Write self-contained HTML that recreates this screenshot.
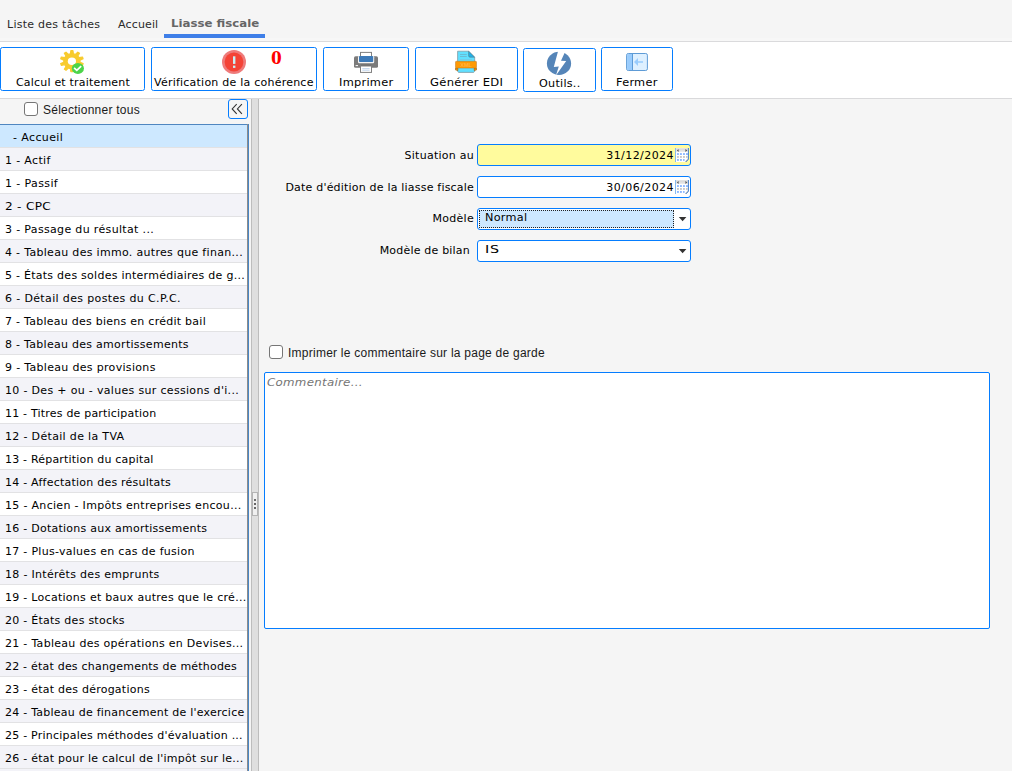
<!DOCTYPE html>
<html lang="fr">
<head>
<meta charset="utf-8">
<title>Liasse fiscale</title>
<style>
*{box-sizing:border-box;margin:0;padding:0}
html,body{width:1012px;height:771px;overflow:hidden;background:#f5f5f5}
body{position:relative;font-family:"DejaVu Sans","Liberation Sans",sans-serif;font-size:11px;letter-spacing:.26px;color:#000}
.abs{position:absolute}
.t{position:absolute;line-height:13px;white-space:nowrap}
.btn{position:absolute;top:47px;height:44px;border:1px solid #057dff;border-radius:2.5px;background:#fff}
.ico{position:absolute;overflow:visible}
#list{left:0;top:124px;width:249px;height:647px;border-top:1px solid #4f86c0;background:#fff;overflow:hidden}
.row{height:23px;line-height:25px;padding-left:5px;border-bottom:1px solid #e2e2e4;white-space:nowrap;overflow:hidden;color:#000;background:#fff}
.row.alt{background:#f3f3f8}
.row.sel{background:#cde8ff}
.lab{position:absolute;text-align:right;line-height:13px;white-space:nowrap}
.inp{position:absolute;left:477px;width:214px;height:22px;border:1px solid #057dff;border-radius:3px;background:#fff}
.ar{font-family:"Liberation Sans",sans-serif;font-size:12px;letter-spacing:.245px;color:#1a1a1a}
</style>
</head>
<body>
<!-- tabs -->
<div class="t" style="left:7px;top:18px;color:#2a2a2a">Liste des tâches</div>
<div class="t" style="left:118px;top:18px;color:#2a2a2a;letter-spacing:.15px">Accueil</div>
<div class="t" style="left:171px;top:17px;font-weight:bold;color:#666;letter-spacing:0;transform-origin:0 50%;transform:scaleX(1.07)">Liasse fiscale</div>
<div class="abs" style="left:164px;top:34px;width:101px;height:4px;background:#3f7fe8"></div>
<div class="abs" style="left:0;top:38px;width:1012px;height:3px;background:#f7f7f7"></div>
<div class="abs" style="left:0;top:41px;width:1012px;height:1px;background:#dadadc"></div>
<!-- toolbar -->
<div class="abs" style="left:0;top:42px;width:1012px;height:56px;background:#fff"></div>
<div class="abs" style="left:0;top:98px;width:1012px;height:1px;background:#d9d9db"></div>

<div class="btn" style="left:0px;width:145px"></div>
<div class="btn" style="left:151px;width:166px"></div>
<div class="btn" style="left:323px;width:86px"></div>
<div class="btn" style="left:415px;width:103px"></div>
<div class="btn" style="left:523px;width:73px;top:48px"></div>
<div class="btn" style="left:601px;width:72px"></div>

<div class="t" id="b1" style="left:16px;top:76px;letter-spacing:.19px">Calcul et traitement</div>
<div class="t" id="b2" style="left:154px;top:76px;letter-spacing:.23px">Vérification de la cohérence</div>
<div class="t" id="b3" style="left:339px;top:76px;letter-spacing:.26px;transform-origin:0 50%;transform:scaleX(1.035)">Imprimer</div>
<div class="t" id="b4" style="left:430px;top:76px;letter-spacing:.26px;transform-origin:0 50%;transform:scaleX(1.052)">Générer EDI</div>
<div class="t" id="b5" style="left:539px;top:77px;letter-spacing:.26px;transform-origin:0 50%;transform:scaleX(1.015)">Outils..</div>
<div class="t" id="b6" style="left:616px;top:76px;letter-spacing:.26px;transform-origin:0 50%;transform:scaleX(1.029)">Fermer</div>
<div class="t" style="left:271px;top:47px;font-family:'Liberation Serif',serif;font-weight:bold;font-size:18px;line-height:20px;letter-spacing:0;color:#f00;transform:translate(1px,.5px) scale(1.2,1)">0</div>

<!-- icons -->
<svg class="ico" style="left:56px;top:46px" width="32" height="32" viewBox="56 46 32 32">
 <g transform="translate(71.9 61.2) scale(1 .92)">
 <path fill="#f8cb2e" stroke="#f8cb2e" stroke-width="1.2" stroke-linejoin="round" d="M-1.49 -8.06 L-1.04 -11.45 L1.04 -11.45 L1.49 -8.06 L3.53 -7.40 L5.89 -9.88 L7.57 -8.65 L5.95 -5.64 L7.21 -3.91 L10.57 -4.53 L11.21 -2.55 L8.13 -1.07 L8.13 1.07 L11.21 2.55 L10.57 4.53 L7.21 3.91 L5.95 5.64 L7.57 8.65 L5.89 9.88 L3.53 7.40 L1.49 8.06 L1.04 11.45 L-1.04 11.45 L-1.49 8.06 L-3.53 7.40 L-5.89 9.88 L-7.57 8.65 L-5.95 5.64 L-7.21 3.91 L-10.57 4.53 L-11.21 2.55 L-8.13 1.07 L-8.13 -1.07 L-11.21 -2.55 L-10.57 -4.53 L-7.21 -3.91 L-5.95 -5.64 L-7.57 -8.65 L-5.89 -9.88 L-3.53 -7.40Z"/>
 <circle r="4.1" fill="#fff"/>
 </g>
 <ellipse cx="77.9" cy="68.45" rx="6.05" ry="5.55" fill="#4cd44a"/>
 <path d="M74.1 67.9 L76.8 70.4 L81.2 66.2" fill="none" stroke="#fff" stroke-width="1.7"/>
</svg>

<svg class="ico" style="left:220px;top:48px" width="28" height="28" viewBox="220 48 28 28">
 <circle cx="234" cy="62" r="12" fill="#ee7b7b"/>
 <circle cx="234" cy="62" r="9.4" fill="#f44336"/>
 <rect x="233" y="56.3" width="2.4" height="7.6" fill="#c9f1f7"/>
 <rect x="233" y="65.6" width="2.4" height="2.3" fill="#c9f1f7"/>
</svg>

<svg class="ico" style="left:352px;top:50px" width="28" height="24" viewBox="352 50 28 24">
 <rect x="354" y="56.3" width="24" height="11.5" rx="1.6" fill="#7b7b7b"/>
 <rect x="360.5" y="52.4" width="11" height="5" fill="#fff" stroke="#808080" stroke-width="1"/>
 <rect x="358" y="56" width="16.2" height="7.2" rx="1.2" fill="#f4f4f4"/>
 <rect x="359" y="56" width="14.2" height="6" rx="0.8" fill="#3d7ab8"/>
 <rect x="355.6" y="65" width="2.4" height="1.1" fill="#f0f0f0"/>
 <rect x="361" y="64.7" width="10.2" height="1" fill="#666"/>
 <rect x="360.5" y="66" width="11" height="6.4" fill="#fff" stroke="#808080" stroke-width="1"/>
 <rect x="362.3" y="68.1" width="7.3" height="1" fill="#c2d6ee"/>
 <rect x="362.3" y="69.7" width="7.3" height="1" fill="#c2d6ee"/>
</svg>

<svg class="ico" style="left:453px;top:49px" width="26" height="26" viewBox="453 49 26 26">
 <path d="M457.6 51.2 H468.6 L474.7 57.2 V71.4 L473.6 72.4 H458.7 L457.6 71.4Z" fill="#61e0ff" stroke="#7d8f98" stroke-width=".7" stroke-linejoin="round"/>
 <path d="M468.6 51.2 L474.6 57.2 H470 Q468.6 57.2 468.6 55.8Z" fill="#1fb2ea" stroke="#5a6a72" stroke-width=".5"/>
 <rect x="460" y="54" width="6.8" height=".8" fill="#6cb4cc"/>
 <rect x="460" y="56.2" width="6.8" height=".8" fill="#6cb4cc"/>
 <rect x="460" y="59" width="12" height=".6" fill="#7cc4dc"/>
 <path d="M455.5 68 V70 L457.8 70.6 V68Z M476.5 68 V70 L474.2 70.6 V68Z" fill="#f59300" stroke="#8a5a10" stroke-width=".5"/>
 <rect x="455.5" y="61.3" width="21" height="6.8" rx=".8" fill="#ff9a03" stroke="#b9772a" stroke-width=".5"/>
 <text x="460.2" y="66.8" font-family="Liberation Sans, sans-serif" font-weight="bold" font-size="5.6" letter-spacing="0" fill="#ffb23e">XML</text>
</svg>

<svg class="ico" style="left:545px;top:49px" width="28" height="28" viewBox="545 49 28 28">
 <ellipse cx="559" cy="63.4" rx="12.1" ry="11.6" fill="#5585b8"/>
 <path d="M558.4 50 L553.8 66.9 L558.8 66.5 L555.9 75.6 L566.2 61 L561 60.75 L565 52 Z" fill="#fff"/>
</svg>

<svg class="ico" style="left:624px;top:51px" width="26" height="22" viewBox="624 51 26 22">
 <rect x="626.6" y="53.5" width="20.8" height="17" rx="1.7" fill="#def0ff" stroke="#5e9bd6" stroke-width="1"/>
 <path d="M628.6 54 H632.5 V70 H628.6 Q627.1 70 627.1 68.5 V55.5 Q627.1 54 628.6 54Z" fill="#99ccfd"/>
 <rect x="632" y="53.5" width="1" height="17" fill="#5e9bd6"/>
 <path d="M634 62 L638 58 V61.2 H643 V62.8 H638 V66Z" fill="#99ccfd"/>
</svg>

<!-- left panel header -->
<div class="abs" style="left:24px;top:102px;width:14px;height:14px;border:1px solid #767676;border-radius:3px;background:#fff"></div>
<div class="t ar" style="left:43px;top:103px;line-height:14px">Sélectionner tous</div>
<div class="abs" style="left:228px;top:99px;width:20px;height:20px;border:1px solid #057dff;border-radius:3px;background:#f5f5f5"></div>
<svg class="ico" style="left:228px;top:99px" width="20" height="20" viewBox="228 99 20 20">
 <path d="M236.7 104.1 L232.2 108.9 L236.7 113.8 M241.9 104.1 L237.4 108.9 L241.9 113.8" fill="none" stroke="#333" stroke-width="1.1"/>
</svg>

<div id="list" class="abs">
<div class="row sel" style="letter-spacing:0.39px;padding-left:13px">- Accueil</div>
<div class="row alt" style="letter-spacing:0.34px">1 - Actif</div>
<div class="row" style="letter-spacing:0.39px">1 - Passif</div>
<div class="row alt"><span style="display:inline-block;transform-origin:0 50%;transform:scaleX(1.10)">2 - CPC</span></div>
<div class="row" style="letter-spacing:0.34px">3 - Passage du résultat ...</div>
<div class="row alt" style="letter-spacing:0.31px">4 - Tableau des immo. autres que finan...</div>
<div class="row" style="letter-spacing:0.26px">5 - États des soldes intermédiaires de g...</div>
<div class="row alt" style="letter-spacing:0.36px">6 - Détail des postes du C.P.C.</div>
<div class="row" style="letter-spacing:0.26px">7 - Tableau des biens en crédit bail</div>
<div class="row alt" style="letter-spacing:0.28px">8 - Tableau des amortissements</div>
<div class="row" style="letter-spacing:0.32px">9 - Tableau des provisions</div>
<div class="row alt" style="letter-spacing:0.32px">10 - Des + ou - values sur cessions d'i...</div>
<div class="row" style="letter-spacing:0.20px">11 - Titres de participation</div>
<div class="row alt" style="letter-spacing:0.33px">12 - Détail de la TVA</div>
<div class="row" style="letter-spacing:0.19px">13 - Répartition du capital</div>
<div class="row alt" style="letter-spacing:0.23px">14 - Affectation des résultats</div>
<div class="row" style="letter-spacing:0.31px">15 - Ancien - Impôts entreprises encou...</div>
<div class="row alt" style="letter-spacing:0.25px">16 - Dotations aux amortissements</div>
<div class="row" style="letter-spacing:0.29px">17 - Plus-values en cas de fusion</div>
<div class="row alt" style="letter-spacing:0.30px">18 - Intérêts des emprunts</div>
<div class="row" style="letter-spacing:0.28px">19 - Locations et baux autres que le cré...</div>
<div class="row alt" style="letter-spacing:0.26px">20 - États des stocks</div>
<div class="row" style="letter-spacing:0.29px">21 - Tableau des opérations en Devises...</div>
<div class="row alt" style="letter-spacing:0.21px">22 - état des changements de méthodes</div>
<div class="row" style="letter-spacing:0.24px">23 - état des dérogations</div>
<div class="row alt" style="letter-spacing:0.24px">24 - Tableau de financement de l'exercice</div>
<div class="row" style="letter-spacing:0.23px">25 - Principales méthodes d'évaluation ...</div>
<div class="row alt" style="letter-spacing:0.24px">26 - état pour le calcul de l'impôt sur le...</div>
<div class="row alt">&nbsp;</div>
</div>
<div class="abs" style="left:247px;top:124px;width:1px;height:647px;background:#8c8c8c"></div>
<div class="abs" style="left:248px;top:124px;width:1px;height:647px;background:#4a86c5"></div>

<!-- splitter -->
<div class="abs" style="left:251px;top:99px;width:8px;height:672px;background:#dfdfdf;border-left:1px solid #bdbdbd;border-right:1px solid #bdbdbd"></div>
<div class="abs" style="left:252px;top:492px;width:6px;height:24px;background:#f0f0f0;border:1px solid #b4b4b4"></div>
<div class="abs" style="left:254px;top:499px;width:2px;height:2px;background:#6e6e6e"></div>
<div class="abs" style="left:254px;top:503px;width:2px;height:2px;background:#666"></div>
<div class="abs" style="left:254px;top:507px;width:2px;height:2px;background:#666"></div>

<!-- form -->
<div class="lab" style="right:538px;top:149px">Situation au</div>
<div class="lab" style="right:538px;top:181px;letter-spacing:.2px">Date d'édition de la liasse fiscale</div>
<div class="lab" style="right:538px;top:212px;letter-spacing:.3px">Modèle</div>
<div class="lab" style="right:542px;top:244px;letter-spacing:.2px">Modèle de bilan</div>

<div class="inp" style="top:144px;background:#fffb9d"></div>
<div class="inp" style="top:176px"></div>
<div class="inp" style="top:208px"></div>
<div class="inp" style="top:240px"></div>
<div class="lab" style="right:338px;top:149px;letter-spacing:.44px">31/12/2024</div>
<div class="lab" style="right:338px;top:181px;letter-spacing:.44px">30/06/2024</div>
<div class="abs" style="left:479px;top:210px;width:195px;height:18px;background:#cde8ff;border:1px dotted #222"></div>
<div class="t" style="left:485px;top:211px;letter-spacing:.26px;transform-origin:0 50%;transform:scaleX(1.024)">Normal</div>
<div class="t" style="left:485px;top:243px;letter-spacing:.6px;transform-origin:0 50%;transform:scaleX(1.3)">IS</div>
<svg class="ico" style="left:678px;top:216px" width="10" height="6" viewBox="678 216 10 6"><path d="M678.8 217 H686.4 L682.6 221.3Z" fill="#333"/></svg>
<svg class="ico" style="left:678px;top:248px" width="10" height="6" viewBox="678 248 10 6"><path d="M678.8 249 H686.4 L682.6 253.3Z" fill="#333"/></svg>

<!-- calendar icons -->
<svg class="ico" style="left:675px;top:148px" width="14" height="14" viewBox="0 0 14 14">
 <rect x="1" y="0" width="12.6" height="14" fill="#fff"/>
 <rect x="0" y="0" width="1" height="14" fill="#86baf0"/>
 <rect x="1" y="0.2" width="12" height="3.7" fill="#dcdcdc"/>
 <rect x="1" y="2.6" width="12" height="1.3" fill="#ececec"/>
 <path d="M1.9 2.4 L3.6 0.9 V3.9Z M12.3 2.4 L10.4 0.9 V3.9Z" fill="#555"/>
 <g fill="#8db9ff"><rect x="2" y="5.1" width="1.9" height="1.9"/><rect x="5" y="5.1" width="1.9" height="1.9"/><rect x="8" y="5.1" width="1.9" height="1.9"/><rect x="11" y="5.1" width="1.9" height="1.9"/>
 <rect x="2" y="11" width="1.9" height="1.9"/><rect x="5" y="11" width="1.9" height="1.9"/><rect x="8" y="11" width="1.6" height="1.9"/></g>
 <g fill="#c9c9c9"><rect x="2" y="8" width="1.9" height="1.9"/><rect x="5" y="8" width="1.9" height="1.9"/><rect x="8" y="8" width="1.9" height="1.9"/><rect x="11" y="8" width="1.6" height="1.9"/></g>
 <path d="M13.8 11.2 L10.6 14 H13.8Z" fill="#fffb9d"/>
 <path d="M10 13.6 L13 10.6 L13 11.6 L11 13.9Z" fill="#b8b8b8"/>
 <path d="M13.4 0 V11.4 L10.9 13.9" fill="none" stroke="#2b6fc4" stroke-width=".9"/>
</svg>
<svg class="ico" style="left:675px;top:180px" width="14" height="14" viewBox="0 0 14 14">
 <rect x="1" y="0" width="12.6" height="14" fill="#fff"/>
 <rect x="0" y="0" width="1" height="14" fill="#86baf0"/>
 <rect x="1" y="0.2" width="12" height="3.7" fill="#dcdcdc"/>
 <rect x="1" y="2.6" width="12" height="1.3" fill="#ececec"/>
 <path d="M1.9 2.4 L3.6 0.9 V3.9Z M12.3 2.4 L10.4 0.9 V3.9Z" fill="#555"/>
 <g fill="#8db9ff"><rect x="2" y="5.1" width="1.9" height="1.9"/><rect x="5" y="5.1" width="1.9" height="1.9"/><rect x="8" y="5.1" width="1.9" height="1.9"/><rect x="11" y="5.1" width="1.9" height="1.9"/>
 <rect x="2" y="11" width="1.9" height="1.9"/><rect x="5" y="11" width="1.9" height="1.9"/><rect x="8" y="11" width="1.6" height="1.9"/></g>
 <g fill="#c9c9c9"><rect x="2" y="8" width="1.9" height="1.9"/><rect x="5" y="8" width="1.9" height="1.9"/><rect x="8" y="8" width="1.9" height="1.9"/><rect x="11" y="8" width="1.6" height="1.9"/></g>
 <path d="M13.8 11.2 L10.6 14 H13.8Z" fill="#fff"/>
 <path d="M10 13.6 L13 10.6 L13 11.6 L11 13.9Z" fill="#b8b8b8"/>
 <path d="M13.4 0 V11.4 L10.9 13.9" fill="none" stroke="#2b6fc4" stroke-width=".9"/>
</svg>

<div class="abs" style="left:269px;top:345px;width:14px;height:14px;border:1px solid #767676;border-radius:3px;background:#fff"></div>
<div class="t ar" style="left:288px;top:346px;line-height:14px">Imprimer le commentaire sur la page de garde</div>
<div class="abs" style="left:264px;top:372px;width:726px;height:257px;border:1px solid #057dff;border-radius:2px;background:#fff"></div>
<div class="t" style="left:267px;top:376px;font-style:italic;color:#757575;letter-spacing:.26px;transform-origin:0 50%;transform:scaleX(1.075)">Commentaire...</div>
</body>
</html>
